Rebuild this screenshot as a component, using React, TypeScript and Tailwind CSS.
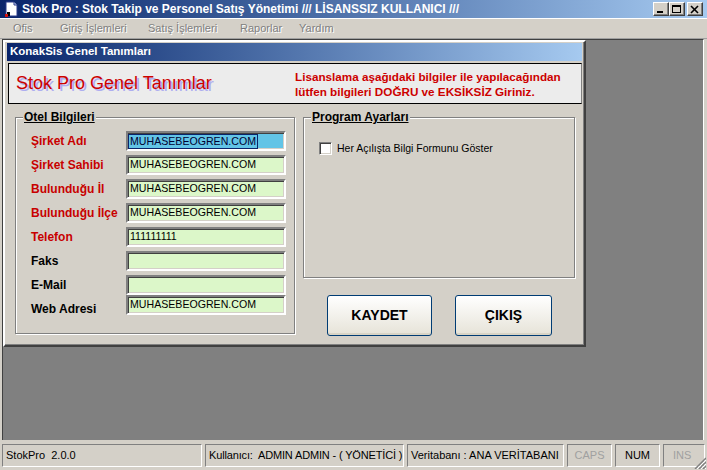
import React from 'react';

const fields = [
  { label: 'Şirket Adı', value: 'MUHASEBEOGREN.COM', red: true, selected: true },
  { label: 'Şirket Sahibi', value: 'MUHASEBEOGREN.COM', red: true },
  { label: 'Bulunduğu İl', value: 'MUHASEBEOGREN.COM', red: true },
  { label: 'Bulunduğu İlçe', value: 'MUHASEBEOGREN.COM', red: true },
  { label: 'Telefon', value: '111111111', red: true },
  { label: 'Faks', value: '', red: false },
  { label: 'E-Mail', value: '', red: false },
  { label: 'Web Adresi', value: 'MUHASEBEOGREN.COM', red: false, last: true },
];

const menu = [
  { label: 'Ofis', w: 'w-[47px]' },
  { label: 'Giriş İşlemleri', w: 'w-[88px]' },
  { label: 'Satış İşlemleri', w: 'w-[92px]' },
  { label: 'Raporlar', w: 'w-[59px]' },
  { label: 'Yardım', w: 'w-[50px]' },
];

export default function App() {
  return (
    <div className="w-[707px] h-[470px] flex flex-col bg-[#d4d0c8] overflow-hidden font-['Liberation_Sans',Arial,sans-serif] text-black select-none">
      {/* main title bar */}
      <div className="h-[18px] flex items-center bg-linear-to-r from-[#0a246a] to-[#a6caf0]">
        <AppIcon />
        <span className="ml-[3px] text-white font-bold text-[12px] whitespace-nowrap">
          Stok Pro : Stok Takip ve Personel Satış Yönetimi /// LİSANSSIZ KULLANICI ///
        </span>
        <div className="ml-auto mr-[4px] flex items-center">
          <WinButton kind="min" />
          <WinButton kind="max" />
          <div className="w-[2px]" />
          <WinButton kind="close" />
        </div>
      </div>

      {/* menu bar */}
      <div className="h-[21px] flex items-center pl-[13px] border-t border-white border-b border-b-[#a0a0a0]">
        {menu.map((m) => (
          <span
            key={m.label}
            className={`${m.w} text-[11px] text-[#808080] [text-shadow:1px_1px_0_#ffffff] whitespace-nowrap`}
          >
            {m.label}
          </span>
        ))}
      </div>

      {/* MDI client */}
      <div className="flex-1 pl-[2px] pr-[3px] pb-[1px] flex">
        <div className="flex-1 bg-[#808080] border-t border-l border-[#404040] border-r border-r-white">
          <ChildWindow />
        </div>
      </div>

      {/* status bar */}
      <div className="h-[29px] flex items-start pt-[3px] pl-[2px] gap-[3px] relative text-[11px]">
        <Panel w="w-[200px]">
          <span className="whitespace-pre">StokPro  2.0.0</span>
        </Panel>
        <Panel w="w-[199px]">
          <span className="whitespace-pre tracking-[-0.15px]">Kullanıcı:  ADMIN ADMIN - ( YÖNETİCİ )</span>
        </Panel>
        <Panel w="w-[157px]">
          <span>Veritabanı : ANA VERİTABANI</span>
        </Panel>
        <Panel w="w-[45px]" center>
          <span className="text-[#a0a0a0]">CAPS</span>
        </Panel>
        <Panel w="w-[45px]" center>
          <span>NUM</span>
        </Panel>
        <Panel w="w-[42px]">
          <span className="pl-[6px] text-[#a0a0a0]">INS</span>
        </Panel>
        <svg className="absolute right-[1px] bottom-[1px]" width="13" height="13" viewBox="0 0 13 13">
          {[0, 4, 8].map((o) => (
            <g key={o}>
              <line x1={13 - o - 1} y1="13" x2="13" y2={13 - o - 1} stroke="#ffffff" strokeWidth="1" />
              <line x1={13 - o - 3} y1="13" x2="13" y2={13 - o - 3} stroke="#808080" strokeWidth="1.4" />
            </g>
          ))}
        </svg>
      </div>
    </div>
  );
}

function ChildWindow() {
  return (
    <div className="w-[583px] h-[307px] flex flex-col border-2 border-t-[#ffffff] border-l-[#ffffff] border-r-[#404040] border-b-[#404040] px-[2px] pt-[1px] pb-[2px] bg-[#d4d0c8] shadow-[inset_-1px_-1px_0_#808080]">
      {/* child title */}
      <div className="h-[18px] shrink-0 flex items-center pl-[3px] bg-linear-to-r from-[#0a246a] to-[#a6caf0]">
        <span className="text-white font-bold text-[11.5px]">KonakSis Genel Tanımları</span>
      </div>

      {/* header */}
      <div className="mt-[2px] ml-[1px] h-[41px] shrink-0 flex items-center bg-[#ececec] border-y border-l border-black border-r border-r-[#808080]">
        <span className="pl-[7px] w-[286px] text-[18px] text-[#cc0000] [text-shadow:2px_2px_0_#aeaef0] whitespace-nowrap">
          Stok Pro Genel Tanımlar
        </span>
        <div className="text-[11.7px] leading-[15px] font-bold text-[#cc0000] whitespace-nowrap">
          <div>Lisanslama aşağıdaki bilgiler ile yapılacağından</div>
          <div>lütfen bilgileri DOĞRU ve EKSİKSİZ Giriniz.</div>
        </div>
      </div>

      {/* body */}
      <div className="flex mt-[13px]">
        {/* Otel Bilgileri */}
        <div className="ml-[8px] w-[280px] h-[217px] border border-[#808080] shadow-[inset_1px_1px_0_#ffffff,1px_1px_0_#ffffff]">
          <GroupTitle>Otel Bilgileri</GroupTitle>
          <div className="mt-[7px] pl-[15px] flex flex-col gap-[4px]">
            {fields.map((f) => (
              <div key={f.label} className={`h-[20px] flex items-center ${f.last ? '-mt-[4px]' : ''}`}>
                <span
                  className={`w-[95px] text-[12px] font-bold whitespace-nowrap ${
                    f.red ? 'text-[#c80000]' : 'text-black'
                  } ${f.last ? 'mt-[7px]' : ''}`}
                >
                  {f.label}
                </span>
                <div
                  className={`w-[160px] h-[20px] flex items-center pl-[1px] border-2 border-t-[#808080] border-l-[#808080] border-b-white border-r-white shadow-[inset_1px_1px_0_#404040,inset_-1px_-1px_0_#d4d0c8] text-[10.6px] ${
                    f.selected ? 'bg-[#62c4e6]' : 'bg-[#dcf7c9]'
                  }`}
                >
                  {f.selected ? (
                    <span className="leading-[13px] px-[1px] outline outline-1 outline-[#0a246a] text-[#000030]">
                      {f.value}
                    </span>
                  ) : (
                    <span className="pl-[1px]">{f.value}</span>
                  )}
                </div>
              </div>
            ))}
          </div>
        </div>

        {/* right column */}
        <div className="ml-[8px] flex flex-col">
          <div className="w-[272px] h-[161px] border border-[#808080] shadow-[inset_1px_1px_0_#ffffff,1px_1px_0_#ffffff]">
            <GroupTitle>Program Ayarları</GroupTitle>
            <div className="mt-[17px] pl-[15px] flex items-center gap-[5px]">
              <span className="w-[13px] h-[13px] bg-white border border-t-[#808080] border-l-[#808080] border-b-white border-r-white shadow-[inset_1px_1px_0_#404040,inset_-1px_-1px_0_#d4d0c8]" />
              <span className="text-[10.5px]">Her Açılışta Bilgi Formunu Göster</span>
            </div>
          </div>
          <div className="mt-[17px] ml-[24px] flex gap-[23px]">
            <XPButton w="w-[105px]">KAYDET</XPButton>
            <XPButton w="w-[97px]">ÇIKIŞ</XPButton>
          </div>
        </div>
      </div>
    </div>
  );
}

function GroupTitle({ children }: { children: React.ReactNode }) {
  return (
    <span className="block w-fit -mt-[8px] ml-[7px] px-[1px] bg-[#d4d0c8] text-[12px] leading-[14px] font-bold underline">
      {children}
    </span>
  );
}

function XPButton({ w, children }: { w: string; children: React.ReactNode }) {
  return (
    <button
      className={`${w} h-[41px] rounded-[3px] border border-[#003c74] bg-linear-to-b from-[#ffffff] to-[#e6e3d8] text-[14px] font-bold text-black shadow-[inset_0_-2px_0_#d8d4c6]`}
    >
      {children}
    </button>
  );
}

function Panel({ w, center, children }: { w: string; center?: boolean; children: React.ReactNode }) {
  return (
    <div
      className={`${w} h-[23px] flex items-center overflow-hidden whitespace-nowrap border border-t-[#808080] border-l-[#808080] border-b-white border-r-white ${
        center ? 'justify-center' : 'pl-[3px]'
      }`}
    >
      {children}
    </div>
  );
}

function WinButton({ kind }: { kind: 'min' | 'max' | 'close' }) {
  return (
    <div className="w-[16px] h-[14px] bg-[#d4d0c8] border border-t-white border-l-white border-r-[#404040] border-b-[#404040] shadow-[inset_-1px_-1px_0_#808080] flex items-center justify-center">
      <svg width="10" height="9" viewBox="0 0 10 9">
        {kind === 'min' && <rect x="1" y="6" width="6" height="2" fill="#000" />}
        {kind === 'max' && (
          <g fill="none" stroke="#000">
            <rect x="0.5" y="0.5" width="8" height="7" />
            <line x1="0" y1="1.5" x2="9" y2="1.5" />
          </g>
        )}
        {kind === 'close' && (
          <g stroke="#000" strokeWidth="1.6">
            <line x1="1" y1="1" x2="8" y2="8" />
            <line x1="8" y1="1" x2="1" y2="8" />
          </g>
        )}
      </svg>
    </div>
  );
}

function AppIcon() {
  return (
    <svg className="ml-[3px]" width="16" height="16" viewBox="0 0 16 16">
      <path d="M3 1 H11 L14 4 V15 H3 Z" fill="#ffffff" stroke="#2a3a8a" strokeWidth="1" />
      <path d="M11 1 V4 H14" fill="#c8d8f8" stroke="#2a3a8a" strokeWidth="1" />
      <rect x="4" y="11" width="3" height="4" fill="#000000" />
      <rect x="2" y="13" width="3" height="3" fill="#d01010" />
    </svg>
  );
}
